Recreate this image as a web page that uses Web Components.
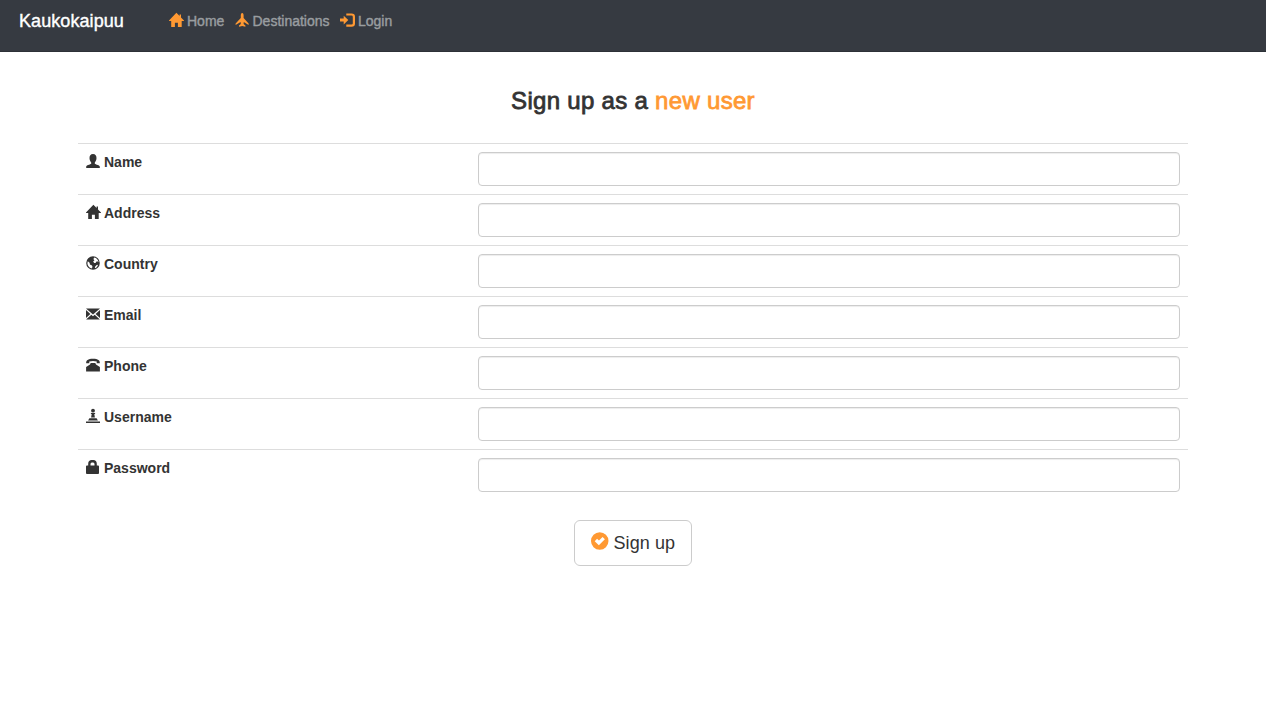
<!DOCTYPE html>
<html lang="en">
<head>
<meta charset="utf-8">
<title>Kaukokaipuu</title>
<style>
body{margin:0;background:#fff;color:#333;font:14px/20px "Liberation Sans",Arial,sans-serif}
</style>
</head>
<body>
<site-nav></site-nav>
<sign-up-form></sign-up-form>
<script>
const ICONS = {
  home: '<path d="M7.4-.2 10.6 3V1.6H12V4.4L15 7.6V8.1H12.7V14H8.9V9.8H5.9V14H2.2V8.1H0V7.6Z"/>',
  user: '<path d="M7 0C9.4 0 10.6 1.7 10.5 4.2 10.4 6.2 9.5 7.7 8.8 8.5V9.7C10.2 10.6 13.8 11.2 13.8 12.6V14H.2V12.6C.2 11.2 3.8 10.6 5.2 9.7V8.5C4.5 7.7 3.6 6.2 3.5 4.2 3.4 1.7 4.6 0 7 0Z"/>',
  globe: '<path fill-rule="evenodd" d="M7 .2a6.8 6.8 0 1 0 0 13.6A6.8 6.8 0 0 0 7 .2ZM8.3 1.5C10.6 2 12.3 3.9 12.5 6.3L11.3 5.2 10.2 5.8 9.6 7.1 8.2 7 7.1 5.6 8.4 4.4 7.4 3ZM1.8 5.3 3.6 6.7 3.9 8.5 6 9.6 6.5 11 5.6 12.4C3.2 11.9 1.5 9.8 1.4 7.3ZM10.3 9.3 12 8.7C11.6 10.3 10.5 11.6 9 12.3L8.9 10.9Z"/>',
  mail: '<path d="M0 1.6H14L7 7.5ZM0 3.1 4.4 6.9 0 11.1ZM14 3.1V11.1L9.6 6.9ZM5.3 7.7 7 9.2 8.7 7.7 13.9 12.5H.1Z"/>',
  phone: '<path d="M.2 5.2C0 2.6 1.9.8 7 .8S14 2.6 13.8 5.2L10.7 5.2V3.6Q7 2.6 3.3 3.6V5.2ZM4.7 4.9H9.3L10 6.4 13.9 9V13.4H.1V9L4 6.4Z"/>',
  pawn: '<circle cx="7" cy="1.7" r="1.9"/><path d="M4.9 4H9.1V5.1H8.3L8.9 8.5H5.1L5.7 5.1H4.9ZM3.4 9.2H10.6L11.9 11.5H2.1ZM0 12.6H14V14H0Z"/>',
  lock: '<path fill-rule="evenodd" d="M2.2 5.5V3.8C2.2 1.4 3.7.1 5.6.1H7.4C9.4.1 10.8 1.4 10.8 3.8V5.5H12.1Q13 5.5 13 6.4V13.1Q13 14 12.1 14H.9Q0 14 0 13.1V6.4Q0 5.5.9 5.5ZM4.5 5.5H8.5V3.9Q8.5 2.4 7.1 2.4H5.9Q4.5 2.4 4.5 3.9Z"/>',
  plane: '<path d="M7.2-.1C8.2-.1 8.6 1.1 8.6 2.5V4.9L13.6 10.5V12L8.8 9.1 8.6 11.1 10.4 12.6V13.8L7.2 12.9 4 13.8V12.6L5.8 11.1 5.6 9.1.6 12V10.5L5.8 4.9V2.5C5.8 1.1 6.2-.1 7.2-.1Z"/>',
  login: '<path d="M0 5.6H3.7V2.8L8.3 7.1 3.7 11.4V8.6H0Z"/><path d="M6.3 1.5H11.5Q13.9 1.5 13.9 3.7V10.5Q13.9 12.7 11.5 12.7H6.3" fill="none" stroke="currentColor" stroke-width="2.2"/>',
  check: '<path fill-rule="evenodd" d="M6.8.2a6.8 6.8 0 1 0 0 13.6A6.8 6.8 0 0 0 6.8.2ZM2.9 7.1 4.7 5.3 6.2 6.7 9 3.8 10.8 5.6 6.1 10.4Z"/>'
};

class GlyphIcon extends HTMLElement {
  connectedCallback() {
    this.attachShadow({mode: 'open'}).innerHTML = `
      <style>:host{display:block;flex:none;width:1em;height:1em}svg{display:block;width:100%;height:100%;overflow:visible;fill:currentColor}</style>
      <svg viewBox="0 0 14 14" aria-hidden="true">${ICONS[this.getAttribute('name')]}</svg>`;
  }
}

class NavLink extends HTMLElement {
  connectedCallback() {
    this.attachShadow({mode: 'open'}).innerHTML = `
      <style>
        :host{display:block}
        a{display:flex;color:#999da0;text-decoration:none;line-height:20px;-webkit-text-stroke:.4px currentColor}
        glyph-icon{color:#ff9933;margin:2px 4px 0 0;-webkit-text-stroke:0}
      </style>
      <a href="#"><glyph-icon name="${this.getAttribute('icon')}"></glyph-icon><slot></slot></a>`;
  }
}

class SiteNav extends HTMLElement {
  connectedCallback() {
    this.attachShadow({mode: 'open'}).innerHTML = `
      <style>
        :host{display:block}
        nav{display:flex;height:52px;box-sizing:border-box;padding:11px 19px 0;background:#363a41;border-bottom:1px solid #2d3137}
        .brand{width:150px;color:#fff;font-size:18px;line-height:20px;letter-spacing:.08px;-webkit-text-stroke:.4px #fff}
        .links{display:flex}
        .home{width:65.5px}.dest{width:105.5px}
      </style>
      <nav><div class="brand">Kaukokaipuu</div><div class="links">
        <nav-link class="home" icon="home">Home</nav-link><nav-link class="dest" icon="plane">Destinations</nav-link><nav-link icon="login">Login</nav-link>
      </div></nav>`;
  }
}

class FormRow extends HTMLElement {
  connectedCallback() {
    this.attachShadow({mode: 'open'}).innerHTML = `
      <style>
        :host{display:grid;grid-template-columns:384px 1fr;padding:8px;border-top:1px solid #ddd}
        label{display:flex;gap:4px;font-weight:bold;line-height:20px}
        glyph-icon{margin-top:2px}
        input{box-sizing:border-box;margin:0 0 0 8px;height:34px;padding:6px 12px;border:1px solid #ccc;border-radius:4px;background:#fff;box-shadow:inset 0 1px 1px rgba(0,0,0,.075);font:inherit}
      </style>
      <label for="f"><glyph-icon name="${this.getAttribute('icon')}"></glyph-icon><slot></slot></label>
      <input id="f" type="${this.getAttribute('type') || 'text'}">`;
  }
}

class SignUpForm extends HTMLElement {
  connectedCallback() {
    this.attachShadow({mode: 'open'}).innerHTML = `
      <style>
        :host{display:block;width:1110px;margin:0 auto}
        h1{margin:0;padding:36px 0 29px;text-align:center;font-size:24px;font-weight:400;line-height:26px;letter-spacing:.3px;-webkit-text-stroke:.8px currentColor}
        h1 span{color:#ff9933}
        button{display:flex;gap:4.5px;align-items:flex-start;box-sizing:border-box;width:118px;height:46px;margin:20px auto 0;padding:10px 16px;border:1px solid #ccc;border-radius:6px;background:#fff;color:#333;font:18px/24px "Liberation Sans",Arial,sans-serif;letter-spacing:.08px;white-space:nowrap}
        glyph-icon{color:#ff9933;margin-top:1px}
      </style>
      <h1>Sign up as a <span>new user</span></h1>
      <form-row icon="user">Name</form-row>
      <form-row icon="home">Address</form-row>
      <form-row icon="globe">Country</form-row>
      <form-row icon="mail">Email</form-row>
      <form-row icon="phone">Phone</form-row>
      <form-row icon="pawn">Username</form-row>
      <form-row icon="lock" type="password">Password</form-row>
      <button type="button"><glyph-icon name="check"></glyph-icon><span>Sign up</span></button>`;
  }
}

customElements.define('glyph-icon', GlyphIcon);
customElements.define('nav-link', NavLink);
customElements.define('form-row', FormRow);
customElements.define('site-nav', SiteNav);
customElements.define('sign-up-form', SignUpForm);
</script>
</body>
</html>
